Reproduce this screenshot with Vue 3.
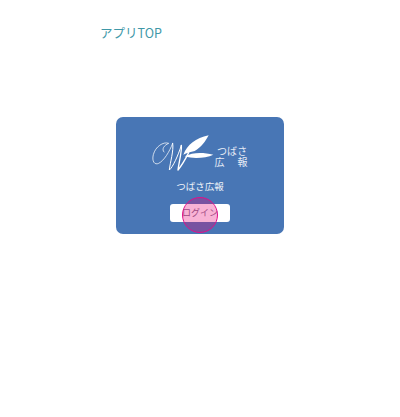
<script setup>
const title = 'アプリTOP'
</script>

<template>
  <div class="page">
    <h1 class="title">{{ title }}</h1>
    <section class="card">
      <div class="logo">
        <svg class="mark" width="66" height="40" viewBox="0 0 198 120" fill="none" aria-hidden="true">
          <g stroke="#fff" stroke-linecap="round" stroke-linejoin="round">
            <path d="M42 60C34 52 42 40 56 34C40 28 16 44 10 68C5 88 14 100 26 94C42 86 58 60 68 34" stroke-width="2.2"/>
            <path d="M68 34C72 56 60 92 58 114C68 106 84 72 94 40" stroke-width="3"/>
            <path d="M94 40C96 60 86 94 84 114C94 102 106 82 116 62" stroke-width="4"/>
          </g>
          <path d="M100 68C112 38 137 18 176 10C166 28 154 46 134 57C122 61 110 62 100 68Z" fill="#fff"/>
          <path d="M104 73C127 61 157 60 190 68C167 78 132 82 104 73Z" fill="#fff"/>
        </svg>
        <div class="logo-text">
          <span class="line-top">つばさ</span>
          <span class="spread"><i>広</i><i>報</i></span>
        </div>
      </div>
      <p class="name">つばさ広報</p>
      <div class="action">
        <button class="login" type="button">ログイン</button>
        <span class="tap"></span>
      </div>
    </section>
  </div>
</template>

<style scoped>
.page {
  width: 400px;
  height: 417px;
  box-sizing: border-box;
  padding: 25px 0 0 100px;
  background: #fff;
  font-family: "Noto Sans CJK JP", "Noto Sans", sans-serif;
}
.title {
  margin: 0;
  font-size: 12.5px;
  line-height: 15px;
  font-weight: 400;
  color: #3f98a8;
}
.card {
  width: 168px;
  height: 117px;
  box-sizing: border-box;
  margin: 77px 0 0 16px;
  padding-top: 15px;
  display: flex;
  flex-direction: column;
  align-items: center;
  background: #4876b5;
  border-radius: 7px;
  color: #fff;
}
.logo {
  display: flex;
  align-items: flex-start;
  height: 40px;
  margin-right: 3px;
}
.mark { display: block; margin-right: -1px; }
.logo-text {
  display: flex;
  flex-direction: column;
  width: 33px;
  margin-top: 13px;
  font-size: 10px;
  line-height: 11px;
  color: #e6ecf5;
}
.line-top { text-align: right; letter-spacing: .2px; }
.spread { display: flex; justify-content: space-between; }
.spread i { font-style: normal; }
.name {
  margin: 7px 0 0;
  font-size: 9.5px;
  line-height: 14px;
  color: #eef2f8;
}
.action {
  position: relative;
  margin-top: 11px;
  width: 60px;
  height: 18px;
}
.login {
  display: block;
  width: 60px;
  height: 18px;
  padding: 0;
  border: 0;
  border-radius: 3px;
  background: #fff;
  color: #7d6a88;
  font: 400 9px/18px "Noto Sans CJK JP", "Noto Sans", sans-serif;
}
.tap {
  position: absolute;
  left: 12px;
  top: -7px;
  width: 36px;
  height: 36px;
  box-sizing: border-box;
  border-radius: 50%;
  border: 1.6px solid #e0108a;
  background: rgba(232, 0, 115, .3);
}
</style>
